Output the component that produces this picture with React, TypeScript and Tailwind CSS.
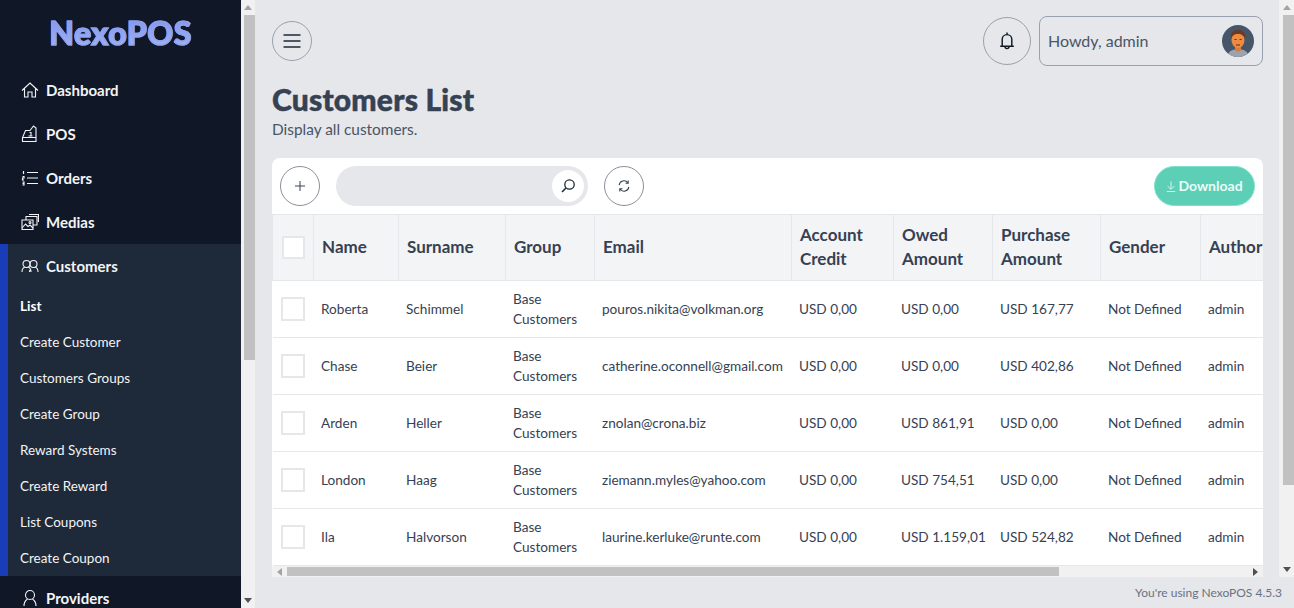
const font = "font-['Lato','Noto_Sans',sans-serif]";

const customers = [
  ['Roberta', 'Schimmel', 'pouros.nikita@volkman.org', 'USD 0,00', 'USD 167,77'],
  ['Chase', 'Beier', 'catherine.oconnell@gmail.com', 'USD 0,00', 'USD 402,86'],
  ['Arden', 'Heller', 'znolan@crona.biz', 'USD 861,91', 'USD 0,00'],
  ['London', 'Haag', 'ziemann.myles@yahoo.com', 'USD 754,51', 'USD 0,00'],
  ['Ila', 'Halvorson', 'laurine.kerluke@runte.com', 'USD 1.159,01', 'USD 524,82'],
];

const subItems = ['Create Customer', 'Customers Groups', 'Create Group', 'Reward Systems', 'Create Reward', 'List Coupons', 'Create Coupon'];

function Icon({ children, className = 'w-[18px] h-[18px]' }: { children: React.ReactNode; className?: string }) {
  return (
    <svg viewBox="0 0 18 18" fill="none" stroke="currentColor" strokeWidth="1.100" className={className}>
      {children}
    </svg>
  );
}

const HomeIcon = () => (
  <Icon>
    <path d="M1 9.500 9 2l8 7.500M3.500 7.500V16H7v-5h4v5h3.500V7.500" />
  </Icon>
);
const PosIcon = () => (
  <Icon>
    <path d="M1.500 16.500h13.500V3l-2.500-2-3.500 4.500H4.500l-3 7v4zM1.500 12.500H15" />
    <path d="M8.500 7.500h1.500v4M7.500 11h4" />
  </Icon>
);
const OrdersIcon = () => (
  <Icon>
    <path d="M6 3.500h11M6 9h11M6 14.500h11" />
    <path d="M2.500 2v3M1.500 7.500h1.500v1.500h-1.500V11H3M1.500 13h1.500v3h-1.500M1.500 14.500H3" strokeWidth="1.200" />
  </Icon>
);
const MediaIcon = () => (
  <Icon>
    <path d="M1 7h11v9.500H1zM5 7V3.500h11V12h-4" />
    <path d="M8 1.500h9.500V9" />
    <path d="m1 15 3.500-4 2.500 2.500 2-1.500 3 3" />
    <circle cx="9" cy="9.500" r="1" />
  </Icon>
);
const UsersIcon = () => (
  <Icon>
    <circle cx="5.500" cy="7" r="3.500" />
    <circle cx="12.500" cy="7" r="3.500" />
    <path d="M1 15c0-3 1.500-4.500 3-5M10 15c0-3-1.500-4.500-3-5M8.500 15c0-.5 0-1 .5-2M17 15c0-3-1.500-4.500-3-5" />
  </Icon>
);
const UserIcon = () => (
  <Icon>
    <circle cx="9" cy="6" r="4.500" />
    <path d="M3 17c0-4 2-6 3.500-7M15 17c0-4-2-6-3.500-7" />
  </Icon>
);

function MainItem({ icon, label }: { icon: React.ReactNode; label: string }) {
  return (
    <div className="flex h-11 shrink-0 items-center gap-[7px] pl-5 text-[15px] font-bold text-gray-100">
      <span className="flex w-[19px] justify-center">{icon}</span>
      {label}
    </div>
  );
}

function Sidebar() {
  return (
    <aside className="flex w-[241px] shrink-0 flex-col overflow-hidden bg-gray-900">
      <div className="flex h-[68px] shrink-0 items-center justify-center pb-[2px]">
        <span className="bg-gradient-to-b from-[#7c8ce8] to-[#a9bdf5] bg-clip-text text-[32px] font-black tracking-[0.5px] text-transparent [-webkit-text-stroke:1.2px_#8fa2ee]">
          NexoPOS
        </span>
      </div>
      <MainItem icon={<HomeIcon />} label="Dashboard" />
      <MainItem icon={<PosIcon />} label="POS" />
      <MainItem icon={<OrdersIcon />} label="Orders" />
      <MainItem icon={<MediaIcon />} label="Medias" />
      <div className="shrink-0 border-l-8 border-blue-800 bg-gray-800">
        <div className="-ml-2">
          <MainItem icon={<UsersIcon />} label="Customers" />
        </div>
        <div className="flex h-9 items-center pl-3 text-[13.5px] font-bold text-white">List</div>
        {subItems.map((item) => (
          <div key={item} className="flex h-9 items-center pl-3 text-[13.5px] text-gray-100">
            {item}
          </div>
        ))}
      </div>
      <MainItem icon={<UserIcon />} label="Providers" />
    </aside>
  );
}

function VScrollbar({ className, thumb }: { className: string; thumb: string }) {
  return (
    <div className={`flex shrink-0 flex-col items-end bg-[#f1f1f1] ${className}`}>
      <div className="flex h-[15px] w-full shrink-0 items-center justify-center">
        <div className="h-0 w-0 border-x-4 border-b-[5px] border-x-transparent border-b-[#a3a3a3]" />
      </div>
      <div className={`w-[11px] shrink-0 bg-[#c1c1c1] ${thumb}`} />
      <div className="mt-auto flex h-[15px] w-full shrink-0 items-center justify-center">
        <div className="h-0 w-0 border-x-4 border-t-[5px] border-x-transparent border-t-[#505050]" />
      </div>
    </div>
  );
}

function HeaderBar() {
  return (
    <div className="flex items-center justify-between">
      <button className="flex h-10 w-10 items-center justify-center rounded-full border border-gray-400 text-gray-800">
        <svg viewBox="0 0 20 16" className="h-4 w-5" fill="none" stroke="currentColor" strokeWidth="1.400">
          <path d="M1.500 2h17M1.500 8h17M1.500 14h17" />
        </svg>
      </button>
      <div className="flex items-center gap-2">
        <button className="flex h-12 w-12 items-center justify-center rounded-full border border-gray-400 text-gray-900">
          <svg viewBox="0 0 20 24" className="h-5 w-4" fill="none" stroke="currentColor" strokeWidth="1.800">
            <path d="M4 18V10a6 6 0 0 1 12 0v8M1.500 18.500h17M10 1.500v2.500M7.500 19a2.500 2.500 0 0 0 5 0" />
          </svg>
        </button>
        <div className="flex h-[50px] w-56 items-center justify-between rounded-lg border border-gray-400 px-2 text-base text-gray-600">
          <span>Howdy, admin</span>
          <svg viewBox="0 0 32 32" className="h-8 w-8 rounded-full">
            <rect width="32" height="32" fill="#475569" />
            <path d="M5 32c1-6 6-8 11-8s10 2 11 8z" fill="#9ca3af" />
            <path d="M13 20h6v5c-1 2-5 2-6 0z" fill="#d97b3a" />
            <ellipse cx="16" cy="15" rx="6.500" ry="8" fill="#ed8b42" />
            <path d="M9 14c-1-7 3-9 7-9s8 2 7 9c-1-3-3-5-7-5s-6 2-7 5z" fill="#6b3a24" />
            <path d="M12.500 14.500h2M17.500 14.500h2M14 20h4" stroke="#5b2c14" strokeWidth="1" />
          </svg>
        </div>
      </div>
    </div>
  );
}

function Toolbar() {
  return (
    <div className="flex h-14 items-center justify-between px-2">
      <div className="flex items-center gap-4">
        <button className="flex h-10 w-10 items-center justify-center rounded-full border border-[#8b9099] text-gray-700">
          <svg viewBox="0 0 12 12" className="h-3 w-3" fill="none" stroke="currentColor">
            <path d="M6 1v10M1 6h10" />
          </svg>
        </button>
        <div className="flex h-10 w-[252px] items-center justify-end rounded-full bg-gray-200 pr-1">
          <button className="flex h-8 w-8 items-center justify-center rounded-full bg-white text-gray-800">
            <svg viewBox="0 0 16 16" className="h-4 w-4" fill="none" stroke="currentColor" strokeWidth="1.300">
              <circle cx="9.500" cy="6.500" r="4.700" />
              <path d="M6 10 2 14" strokeWidth="1.600" />
            </svg>
          </button>
        </div>
        <button className="flex h-10 w-10 items-center justify-center rounded-full border border-[#8b9099] text-gray-700">
          <svg viewBox="0 0 16 16" className="h-[14px] w-[14px]" fill="none" stroke="currentColor" strokeWidth="1.200">
            <path d="M2.500 7a5.500 5.500 0 0 1 10-2.500M13.500 9a5.500 5.500 0 0 1-10 2.500M12.800 1.800v3h-3M3.200 14.200v-3h3" />
          </svg>
        </button>
      </div>
      <button className="flex h-10 w-[101px] items-center justify-center gap-[2px] rounded-full border border-[#7fe3cc] bg-[#5ccfb6] text-sm font-bold text-[#edfbf7]">
        <svg viewBox="0 0 12 14" className="h-[13px] w-[10px]" fill="none" stroke="currentColor">
          <path d="M6 1v9M2 6.500 6 10.500l4-4M1 13h10" />
        </svg>
        Download
      </button>
    </div>
  );
}

const thClass = 'border-x border-gray-200 px-2 text-left text-[17px] leading-6 font-bold text-gray-700';
const tdClass = 'pr-2 pl-[7.5px] text-[13.6px] text-gray-700';
const lineClass = `${tdClass} pt-[2px] whitespace-nowrap`;

function Checkbox({ size }: { size: string }) {
  return <div className={`mx-auto border-2 border-gray-200 bg-white ${size}`} />;
}

function CustomersTable() {
  return (
    <div className="h-[352px] overflow-hidden border-t border-gray-200">
      <table className="w-[1100px] table-fixed border-collapse">
        <colgroup>
          <col className="w-[41px]" />
          <col className="w-[85px]" />
          <col className="w-[107px]" />
          <col className="w-[89px]" />
          <col className="w-[197px]" />
          <col className="w-[102px]" />
          <col className="w-[99px]" />
          <col className="w-[108px]" />
          <col className="w-[100px]" />
          <col className="w-[172px]" />
        </colgroup>
        <thead>
          <tr className="h-[65px] border-b border-gray-200 bg-gray-100">
            <th className={thClass}>
              <Checkbox size="h-[23px] w-[23px]" />
            </th>
            <th className={thClass}>Name</th>
            <th className={thClass}>Surname</th>
            <th className={thClass}>Group</th>
            <th className={thClass}>Email</th>
            <th className={thClass}>Account Credit</th>
            <th className={thClass}>Owed Amount</th>
            <th className={thClass}>Purchase Amount</th>
            <th className={thClass}>Gender</th>
            <th className={thClass}>Author</th>
          </tr>
        </thead>
        <tbody>
          {customers.map(([name, surname, email, owed, purchase]) => (
            <tr key={email} className="h-[57px] border-b border-gray-200">
              <td className={tdClass}>
                <Checkbox size="h-6 w-6" />
              </td>
              <td className={lineClass}>{name}</td>
              <td className={lineClass}>{surname}</td>
              <td className={`${tdClass} leading-5`}>Base Customers</td>
              <td className={lineClass}>{email}</td>
              <td className={lineClass}>USD 0,00</td>
              <td className={lineClass}>{owed}</td>
              <td className={lineClass}>{purchase}</td>
              <td className={lineClass}>Not Defined</td>
              <td className={lineClass}>admin</td>
            </tr>
          ))}
        </tbody>
      </table>
    </div>
  );
}

function HScrollbar() {
  return (
    <div className="flex h-[11px] items-center bg-[#f1f1f1]">
      <div className="flex w-[15px] shrink-0 justify-center">
        <div className="h-0 w-0 border-y-4 border-r-[5px] border-y-transparent border-r-[#a3a3a3]" />
      </div>
      <div className="h-[9px] w-[772px] bg-[#c1c1c1]" />
      <div className="ml-auto flex w-[15px] shrink-0 justify-center">
        <div className="h-0 w-0 border-y-4 border-l-[5px] border-y-transparent border-l-[#505050]" />
      </div>
    </div>
  );
}

export default function App() {
  return (
    <div className={`flex h-[608px] w-[1294px] overflow-hidden bg-gray-200 ${font}`}>
      <Sidebar />
      <VScrollbar className="w-[14px]" thumb="h-[345px]" />
      <div className="flex min-w-0 flex-1 flex-col">
        <div className="flex h-[577px] shrink-0">
          <main className="min-w-0 flex-1 pt-4 pr-4 pl-[17px]">
            <HeaderBar />
            <h1 className="mt-[15px] text-[30px] leading-9 font-black tracking-[0.2px] text-gray-700 [-webkit-text-stroke:0.5px_#374151]">
              Customers List
            </h1>
            <p className="text-[15.4px] leading-6 text-gray-600">Display all customers.</p>
            <div className="mt-[17px] overflow-hidden rounded-t-lg bg-white">
              <Toolbar />
              <CustomersTable />
              <HScrollbar />
            </div>
          </main>
          <VScrollbar className="w-[15px]" thumb="h-[470px]" />
        </div>
        <div className="flex h-[31px] shrink-0 items-center justify-end pr-3 text-xs text-gray-500">
          You're using NexoPOS 4.5.3
        </div>
      </div>
    </div>
  );
}
